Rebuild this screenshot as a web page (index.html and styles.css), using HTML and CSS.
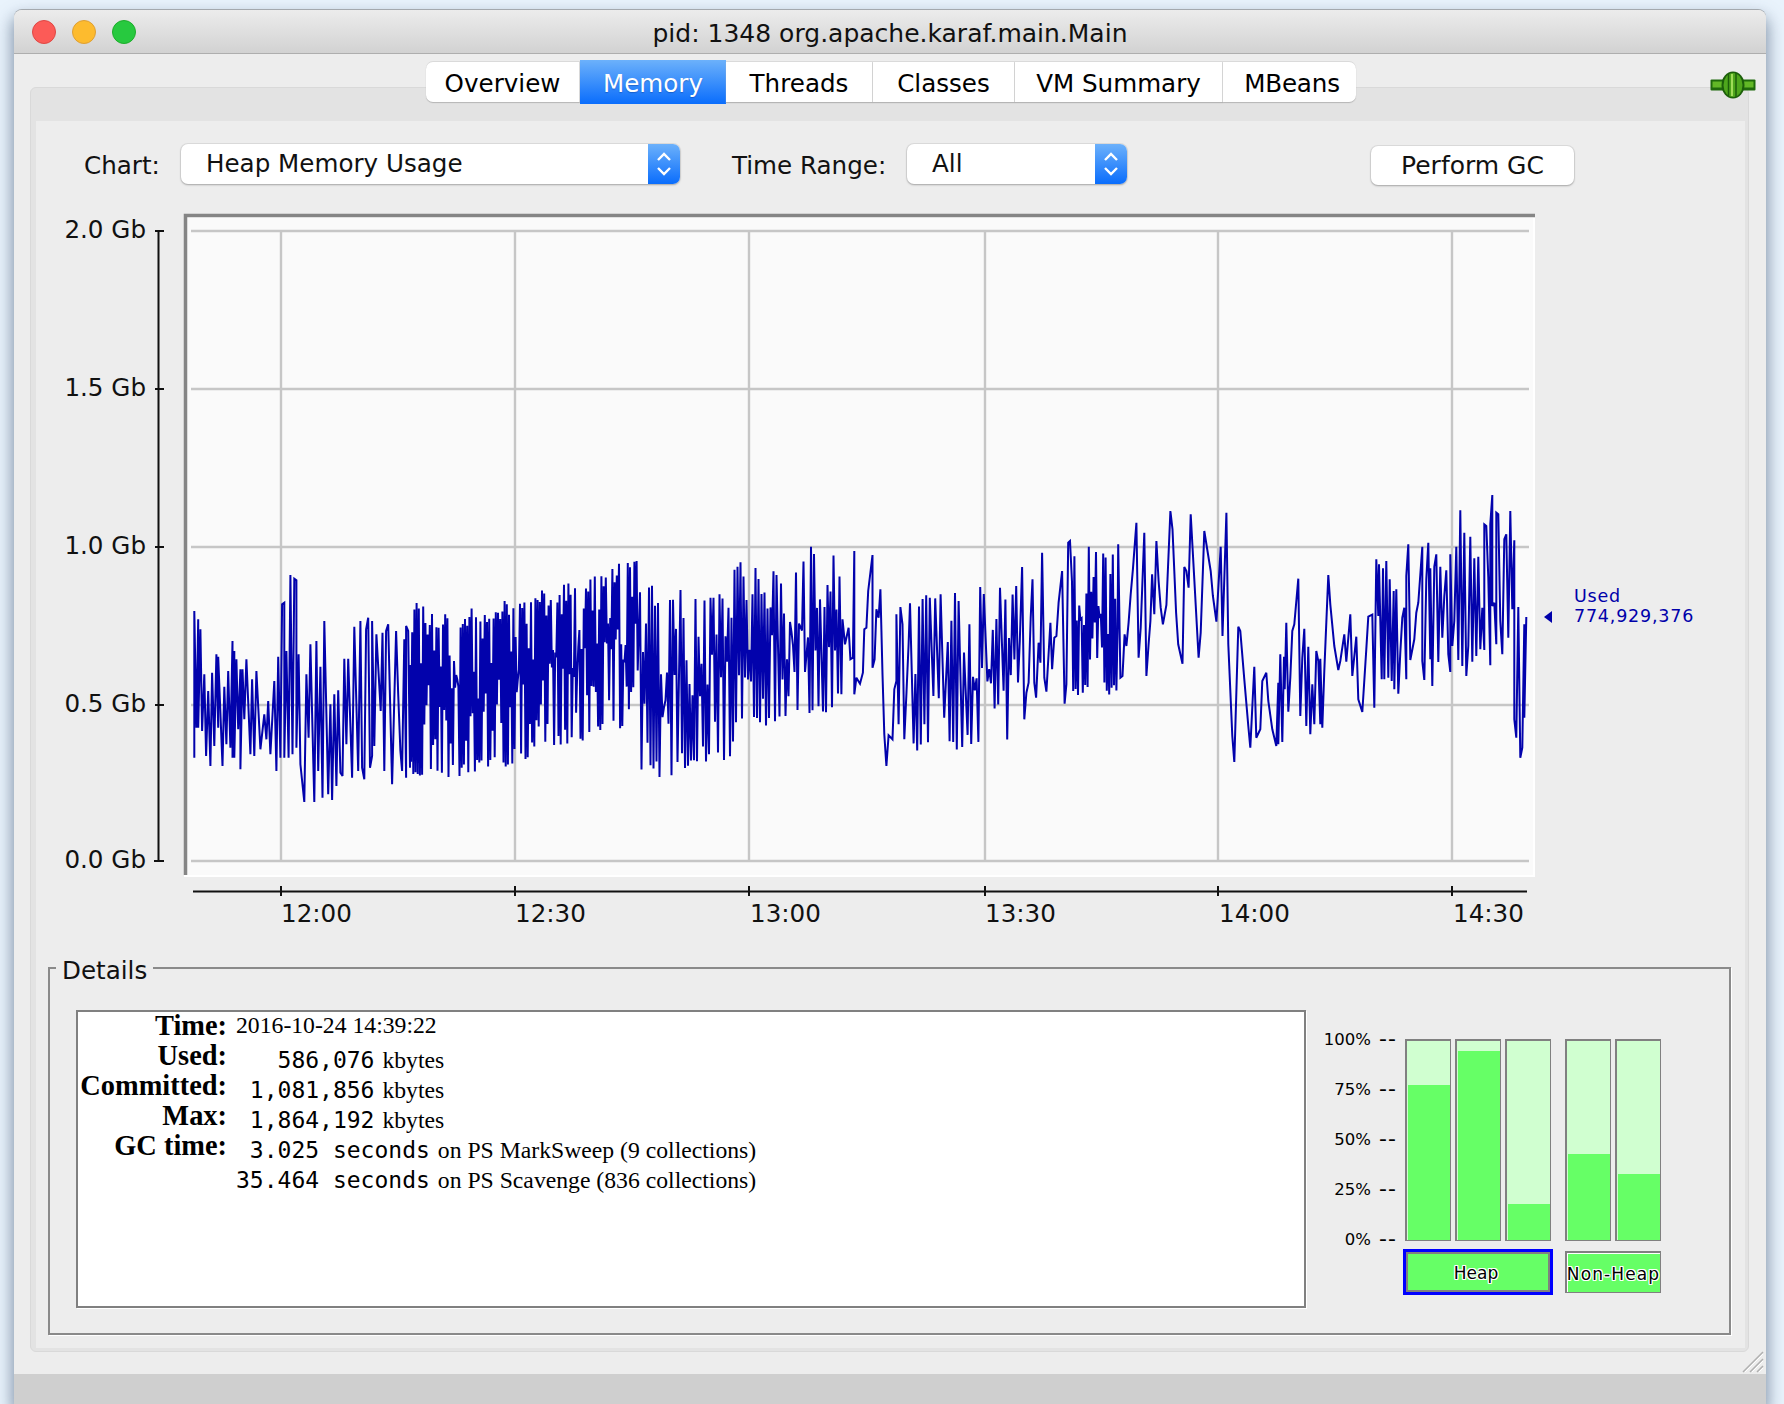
FILE: index.html
```html
<!DOCTYPE html>
<html lang="en">
<head>
<meta charset="utf-8">
<title>pid: 1348 org.apache.karaf.main.Main</title>
<link rel="stylesheet" href="styles.css">
</head>
<body>
<div class="window">
  <header class="titlebar">
    <div class="lights"><span class="light red"></span><span class="light amber"></span><span class="light green"></span></div>
    <div class="title">pid: 1348 org.apache.karaf.main.Main</div>
  </header>
  <div class="content">
    <nav class="tabs">
      <div class="tab tab-first t1">Overview</div>
      <div class="tab tab-active t2">Memory</div>
      <div class="tab t3">Threads</div>
      <div class="tab t4">Classes</div>
      <div class="tab t5">VM Summary</div>
      <div class="tab tab-last t6">MBeans</div>
    </nav>
    <div class="pane">
      <div class="panel">
        <div class="controls">
          <span class="ctl-label chart-label">Chart:</span>
          <div class="combo combo-chart"><span class="combo-text">Heap Memory Usage</span><span class="combo-arrows"><svg width="16" height="26" viewBox="0 0 16 26"><path class="chev" d="M2 9 L8 3 L14 9 M2 17 L8 23 L14 17"/></svg></span></div>
          <span class="ctl-label range-label">Time Range:</span>
          <div class="combo combo-range"><span class="combo-text">All</span><span class="combo-arrows"><svg width="16" height="26" viewBox="0 0 16 26"><path class="chev" d="M2 9 L8 3 L14 9 M2 17 L8 23 L14 17"/></svg></span></div>
          <button class="gc-button" type="button">Perform GC</button>
        </div>
        <svg class="chart" width="1709" height="740" viewBox="36 200 1709 740">
          <rect class="plot-edge" x="184" y="213" width="1351" height="663"/>
          <rect class="plot-bg" x="187" y="217" width="1346" height="657"/>
          <path class="plot-frame" d="M185.5 874 V214.5 H1535"/>
          <path class="grid" d="M191 230H1529M191 388H1529M191 546H1529M191 704H1529M191 860H1529M281 230V860M515 230V860M749 230V860M985 230V860M1218 230V860M1452 230V860"/>
          <path id="usedLine" class="series" d=""/>
          <path class="axis" d="M158.5 230V860M155 230H164M155 388H164M155 546H164M155 704H164M154 860H164"/>
          <path class="axis" d="M193 890.5H1527M281 885V895M515 885V895M749 885V895M985 885V895M1218 885V895M1452 885V895"/>
          <g class="axis-text">
            <text class="y-label" x="146" y="237">2.0 Gb</text>
            <text class="y-label" x="146" y="395">1.5 Gb</text>
            <text class="y-label" x="146" y="553">1.0 Gb</text>
            <text class="y-label" x="146" y="711">0.5 Gb</text>
            <text class="y-label" x="146" y="867">0.0 Gb</text>
            <text x="281" y="921">12:00</text>
            <text x="515" y="921">12:30</text>
            <text x="750" y="921">13:00</text>
            <text x="985" y="921">13:30</text>
            <text x="1219" y="921">14:00</text>
            <text x="1453" y="921">14:30</text>
          </g>
          <path class="legend-arrow" d="M1552 610 L1544 616 L1552 622 Z"/>
          <text class="legend-text" x="1574" y="601">Used</text>
          <text class="legend-text" x="1574" y="621">774,929,376</text>
        </svg>
        <section class="details">
          <span class="details-title">Details</span>
          <div class="info">
            <div class="info-row info-first"><b class="info-key">Time:</b><span class="info-val">2016-10-24 14:39:22</span></div>
            <div class="info-row"><b class="info-key">Used:</b><span class="info-val"><code>   586,076</code> kbytes</span></div>
            <div class="info-row"><b class="info-key">Committed:</b><span class="info-val"><code> 1,081,856</code> kbytes</span></div>
            <div class="info-row"><b class="info-key">Max:</b><span class="info-val"><code> 1,864,192</code> kbytes</span></div>
            <div class="info-row"><b class="info-key">GC time:</b><span class="info-val"><code> 3.025 seconds</code> on PS MarkSweep (9 collections)</span></div>
            <div class="info-row"><b class="info-key"></b><span class="info-val"><code>35.464 seconds</code> on PS Scavenge (836 collections)</span></div>
          </div>
          <div class="meters">
            <div class="scale">
              <div class="scale-row"><span>100%</span><i>--</i></div>
              <div class="scale-row"><span>75%</span><i>--</i></div>
              <div class="scale-row"><span>50%</span><i>--</i></div>
              <div class="scale-row"><span>25%</span><i>--</i></div>
              <div class="scale-row"><span>0%</span><i>--</i></div>
            </div>
            <div class="group group-heap">
              <div class="bars">
                <div class="bar"><div class="fill" style="height:78%"></div></div>
                <div class="bar"><div class="fill" style="height:95%"></div></div>
                <div class="bar"><div class="fill" style="height:18%"></div></div>
              </div>
              <div class="pool pool-selected"><span>Heap</span></div>
            </div>
            <div class="group group-nonheap">
              <div class="bars">
                <div class="bar"><div class="fill" style="height:43%"></div></div>
                <div class="bar"><div class="fill" style="height:33%"></div></div>
              </div>
              <div class="pool pool-wide"><span>Non-Heap</span></div>
            </div>
          </div>
        </section>
      </div>
    </div>
  </div>
  <footer class="statusbar"></footer>
  <svg class="plug" width="46" height="28" viewBox="0 0 46 28">
    <rect x="0.5" y="8.5" width="45" height="11" rx="1" fill="#1f6a0c"/>
    <rect x="2.5" y="10.5" width="41" height="6" fill="#62b826"/>
    <ellipse cx="23" cy="14" rx="11.5" ry="13.5" fill="#1c5f0a"/>
    <ellipse cx="23" cy="14" rx="9.5" ry="12" fill="#4ea61c"/>
    <path d="M18.5 3 V25 M26 2 V26" stroke="#1c5f0a" stroke-width="1.5" fill="none"/>
    <path d="M22 3 V25" stroke="#a0dc58" stroke-width="2" fill="none"/>
  </svg>
  <svg class="grip" width="22" height="22" viewBox="0 0 22 22">
    <path d="M1 21 L21 1 M8 21 L21 8 M15 21 L21 15" stroke="#b0b0b0" stroke-width="1.5" fill="none"/>
    <path d="M3 21 L21 3 M10 21 L21 10 M17 21 L21 17" stroke="#fff" stroke-width="1" fill="none"/>
  </svg>
</div>
<script src="chart.js"></script>
</body>
</html>
```

FILE: styles.css
```css
* { box-sizing: border-box; }
html, body { margin: 0; height: 100%; }
body {
  width: 1784px;
  height: 1404px;
  overflow: hidden;
  padding: 10px 18px 0 14px;
  background: #e9f3fc;
  font-family: "DejaVu Sans", sans-serif;
  color: #000;
}
.window {
  position: relative;
  height: 1394px;
  display: flex;
  flex-direction: column;
  background: #ededed;
  border-radius: 8px 8px 0 0;
  box-shadow: 0 -1px 0 #a4a9ae, 0 8px 16px 2px rgba(70, 90, 120, .62);
}
.titlebar {
  height: 44px;
  flex: none;
  display: grid;
  grid-template-columns: 1fr auto 1fr;
  align-items: center;
  background: linear-gradient(#ececec, #d2d2d2);
  border-bottom: 1px solid #aeaeae;
  border-radius: 8px 8px 0 0;
}
.lights { display: flex; gap: 16px; padding-left: 18px; }
.light { width: 24px; height: 24px; border-radius: 50%; }
.red { background: #fc5b57; border: 1px solid #df4744; }
.amber { background: #fdbb2e; border: 1px solid #de9f34; }
.green { background: #27c93f; border: 1px solid #1dad2b; }
.title { grid-column: 2; font-size: 25px; line-height: 30px; color: #111; margin-top: 5px; }
.content { flex: 1; display: flex; flex-direction: column; }
.tabs {
  position: relative;
  z-index: 1;
  height: 44px;
  margin-top: 6px;
  padding-left: 2px;
  display: flex;
  justify-content: center;
  align-items: center;
}
.tab {
  height: 40px;
  display: flex;
  align-items: center;
  justify-content: center;
  padding-top: 3px;
  background: #fff;
  font-size: 24.6px;
  border-right: 1px solid #d8d8d8;
  box-shadow: 0 1px 1px #b5b5b5, 0 -1px 0 #dadada;
}
.t1 { width: 154px; }
.t2 { width: 146px; }
.t3 { width: 147px; }
.t4 { width: 142px; }
.t5 { width: 208px; }
.t6 { width: 133px; padding-left: 5px; letter-spacing: -.2px; }
.tab-first { border-radius: 7px 0 0 7px; }
.tab-last { border-radius: 0 7px 7px 0; border-right: 0; }
.tab-active {
  height: 44px;
  color: #fff;
  background: linear-gradient(#6cb1fb, #0a6dfc);
  border: 0;
  box-shadow: none;
  text-shadow: 0 1px 1px rgba(0, 40, 120, .35);
}
.pane {
  flex: none;
  height: 1265px;
  margin: -17px 17px 0 16px;
  padding: 33px 3px 3px 5px;
  background: #e3e3e3;
  border: 1px solid #d9d9d9;
  border-radius: 6px;
}
.panel { height: 100%; background: #ededed; }
.controls { display: flex; align-items: flex-start; padding: 23px 0 0 48px; height: 80px; }
.ctl-label { font-size: 24.6px; line-height: 30px; margin-top: 7px; color: #111; }
.chart-label { width: 97px; }
.range-label { width: 175px; margin-left: 52px; }
.combo {
  height: 40px;
  display: flex;
  background: #fff;
  border-radius: 7px;
  box-shadow: 0 1px 2px #a8a8a8, 0 0 0 1px #dcdcdc;
}
.combo-chart { width: 499px; }
.combo-range { width: 220px; }
.combo-text { flex: 1; padding-left: 25px; font-size: 24.6px; line-height: 40px; color: #111; }
.combo-arrows {
  width: 32px;
  display: flex;
  align-items: center;
  justify-content: center;
  background: linear-gradient(#6cb1fb, #0a6dfc);
  border-radius: 0 7px 7px 0;
}
.chev { fill: none; stroke: #fff; stroke-width: 2.4; }
.gc-button {
  width: 203px;
  height: 39px;
  margin: 2px 0 0 244px;
  padding: 0;
  background: #fff;
  border: 0;
  border-radius: 7px;
  box-shadow: 0 1px 2px #a8a8a8, 0 0 0 1px #dcdcdc;
  font: 25px "DejaVu Sans", sans-serif;
  color: #111;
}
.chart { display: block; }
.plot-edge { fill: #fff; }
.plot-bg { fill: #fafafa; }
.plot-frame { fill: none; stroke: #858585; stroke-width: 3.5; }
.grid { fill: none; stroke: #c6c6c6; stroke-width: 2.4; }
.series { fill: none; stroke: #0202ac; stroke-width: 2; stroke-linejoin: miter; stroke-miterlimit: 3; }
.axis { fill: none; stroke: #111; stroke-width: 2; }
.axis-text text { font: 24.6px "DejaVu Sans", sans-serif; fill: #111; }
.axis-text .y-label { text-anchor: end; }
.legend-arrow { fill: #0000aa; }
.legend-text { font: 17.5px "DejaVu Sans", sans-serif; fill: #0000aa; letter-spacing: .8px; }
.details {
  position: relative;
  width: 1683px;
  height: 368px;
  margin: 26px 0 0 12px;
  padding: 41px 0 0 26px;
  display: flex;
  border: 2px solid #8a8a8a;
  box-shadow: 1px 1px 0 #fff;
}
.details-title {
  position: absolute;
  top: -13px;
  left: 6px;
  padding: 0 6px;
  background: #ededed;
  font-size: 24.6px;
  line-height: 30px;
  color: #111;
}
.info {
  width: 1230px;
  height: 298px;
  padding-top: 2px;
  background: #fff;
  border: 2px solid #808080;
  box-shadow: 1px 1px 0 #fff;
  font-family: "Liberation Serif", serif;
  font-size: 23.7px;
  color: #000;
}
.info-row { display: flex; height: 30px; align-items: flex-start; }
.info-key { width: 149px; margin-top: -3px; text-align: right; font-size: 28.4px; line-height: 30px; }
.info-val { margin: 1px 0 0 9px; line-height: 30px; white-space: pre; }
.info-first .info-val { margin-top: -4px; }
.info-val code { font-family: "DejaVu Sans Mono", monospace; font-size: 23px; margin-right: 2px; }
.meters { display: flex; align-items: flex-start; }
.scale { width: 91px; margin-top: 4px; }
.scale-row {
  height: 50px;
  display: flex;
  justify-content: flex-end;
  align-items: center;
  font-size: 16.5px;
  white-space: nowrap;
}
.scale-row i { width: 26px; text-align: right; font-style: normal; font-size: 22px; line-height: 20px; letter-spacing: 1px; }
.group { margin-top: 29px; }
.group-heap { width: 146px; margin-left: 8px; }
.group-nonheap { width: 96px; margin-left: 14px; }
.bars { display: flex; gap: 4px; height: 202px; }
.bar {
  width: 46px;
  display: flex;
  flex-direction: column;
  justify-content: flex-end;
  padding-left: 1px;
  background: #d0ffd0;
  border: 1px solid #808080;
  border-width: 2px 1px 1px 2px;
}
.fill { background: #66ff66; }
.pool {
  height: 42px;
  margin-top: 10px;
  display: flex;
  align-items: center;
  justify-content: center;
  padding-top: 2px;
  background: #66ff66;
  border: 1px solid #808080;
  border-width: 2px 1px 1px 2px;
  box-shadow: inset 1px 1px 0 #fff;
  font-size: 17px;
  text-shadow: 1px 0 0 #fff, -1px 0 0 #fff, 0 1px 0 #fff, 0 -1px 0 #fff, 1px 1px 0 #fff, -1px -1px 0 #fff, 1px -1px 0 #fff, -1px 1px 0 #fff;
  white-space: nowrap;
}
.pool-wide { letter-spacing: 1.1px; }
.pool-selected {
  width: 150px;
  height: 46px;
  margin: 8px 0 0 -2px;
  padding-right: 4px;
  border: 3px solid #0000ff;
  box-shadow: inset 0 0 0 2px #808080;
}
.statusbar { flex: none; height: 30px; background: #cfcfcf; }
.plug { position: absolute; left: 1696px; top: 61px; }
.grip { position: absolute; left: 1728px; top: 1341px; }
```

FILE: chart.js
```js
// Samples of the "Used" heap series; dense stretches are seeded, sparse ones are read off the trace.
(function () {
  var seed = 1348;
  function rnd() {
    seed |= 0; seed = seed + 0x6D2B79F5 | 0;
    var t = Math.imul(seed ^ seed >>> 15, 1 | seed);
    t = t + Math.imul(t ^ t >>> 7, 61 | t) ^ t;
    return ((t ^ t >>> 14) >>> 0) / 4294967296;
  }
  var pts = [];
  function env(table, x) {
    for (var i = 1; i < table.length; i++) {
      if (x <= table[i][0]) {
        var a = table[i - 1], b = table[i], k = (x - a[0]) / (b[0] - a[0]);
        return [a[1] + (b[1] - a[1]) * k, a[2] + (b[2] - a[2]) * k];
      }
    }
    return table[table.length - 1].slice(1);
  }
  function gen(table, step, skip) {
    var x = table[0][0], end = table[table.length - 1][0], up = true;
    while (x < end) {
      var e = env(table, x), r = rnd(), span = e[1] - e[0];
      var off = (r < .5 ? r * .35 : r * r) * span * .62;
      pts.push([x, up ? e[0] + off : e[1] - off]);
      up = !up;
      x += step * (rnd() < skip ? 2 : 1);
    }
  }
  function trace(list, ox, sx, oy) {
    for (var i = 0; i < list.length; i += 2) {
      pts.push([ox + list[i] / sx, oy + list[i + 1] / 3]);
    }
  }
  var Z5 = [170, 2.8, 480], Z6 = [720, 2.8, 480], Z7 = [1200, 3, 470];

  trace([68,830,68,390,74,740,79,415,79,740,85,445,90,750,96,580,101,825,107,630,113,855,118,575,124,795,130,520,135,740,135,527,147,855,152,617,158,790,163,570,169,800,175,480,175,830,180,510,180,830,186,535,191,745,197,565,197,865,203,565,208,715,214,535,225,820,230,595,236,825,242,570,253,805,264,700,270,775,275,660,281,820,292,600,298,870,303,527,309,830,314,370,320,365,320,830,326,510,332,830,337,282,343,820,348,293,354,298,354,800,360,520,365,850,376,963,382,580,388,770,393,490,399,745,404,963,410,480,415,870,421,557,427,950,432,420,443,940,449,670,454,957,460,640,466,915,471,628,477,875,483,885,488,533,494,790,499,533,510,890,516,437,527,870,533,420,538,860,544,895,549,445,555,410,560,860,566,825,566,420,572,795,578,460,590,690,595,455,600,870,605,450,611,430,622,910,633,450,639,640,645,810,650,870,656,475,661,890,661,435,667,450,672,860], Z5[0], Z5[1], Z5[2]);
  gen([[410,600,780],[450,612,780],[500,600,768],[560,585,748],[620,562,730],[638,548,712]], 1.1, 0);
  gen([[640,572,775],[660,592,780],[700,585,762],[730,592,760],[736,558,730],[790,568,728],[815,532,715],[840,538,708]], 1.5, .1);
  trace([340,640,343,415,350,490,360,440,365,535,372,530,376,210,376,640,382,590,392,608,400,575,404,445,410,440,415,330,427,222,427,560,433,535,438,385,444,410,449,325,455,580,460,760,466,855,472,763,483,775,488,625,494,600,494,400,500,730,505,378,511,430,516,775,522,640,528,490], Z6[0], Z6[1], Z6[2]);
  gen([[910,596,752],[945,590,750],[975,582,748],[1000,586,742],[1022,576,738]], 1.8, .15);
  trace([846,258,852,715,858,635,864,605,870,410,875,295,880,605,885,650,892,485,897,545,902,215,908,590,914,632,925,425,930,565,936,470,942,465,948,365,958,270,965,668,970,610,975,185,980,180], Z6[0], Z6[1], Z6[2]);
  gen([[1072,540,700],[1118,540,692]], 1.2, 0);
  trace([1115,190,1121,590,1127,585,1133,460,1138,495,1144,425,1150,340,1156,265,1166,125,1172,530,1178,440,1188,155,1194,585,1200,490,1205,420,1210,280,1216,400,1222,180,1228,300,1234,380,1240,430,1250,372,1261,90,1267,145,1277,395,1283,490,1295,548,1300,258,1306,270,1312,320,1318,100,1328,295,1340,530,1346,455,1356,150,1374,270,1380,345,1390,422,1402,197,1407,465,1418,95], Z6[0], Z6[1], Z6[2]);
  trace([85,520,97,795,103,873,115,467,121,480,133,625,145,765,151,830,163,587,169,800,181,775,187,630,199,605,205,690,217,775,229,825,235,635,235,820,241,550,247,813,252,557,254,655,259,455,265,722,271,620,277,480,283,460,295,323,301,735,307,560,313,473,319,765,325,527,331,790,337,640,343,760,349,540,355,570,361,760,361,563,367,770,373,600,385,312,391,400,403,525,415,597,421,570,433,490,439,572,451,430,457,615,469,497,475,685,487,723,499,535,505,437,517,431,523,710], Z7[0], Z7[1], Z7[2]);
  trace([529,265,535,435,537,280,545,625,549,292,553,625,559,270,565,620,569,325,575,630,581,360,583,655,589,355], Z7[0], Z7[1], Z7[2]);
  trace([595,668,601,545,607,440,613,410,619,625,619,315,625,220,631,567,643,505,649,425,655,395,667,227,667,570,673,627,679,325,685,215,691,565,691,292,697,645,703,287,709,250,715,573,721,287,727,500,733,375,739,298,745,550,751,603,751,250,757,525,763,450,769,227,775,567,781,118,787,585,793,185,799,615,805,525,811,197,817,572,823,262,829,555,835,257,841,535,847,410,853,537,853,160,859,165,865,320,871,583,871,160,877,72,877,405,883,395,889,520,889,125,895,130,901,450,907,550,913,205,919,190,925,500,931,120,937,415,943,208,943,745,949,800,955,408,961,860,967,830,973,460,973,740,979,438], Z7[0], Z7[1], Z7[2]);

  var d = pts.map(function (p, i) {
    return (i ? 'L' : 'M') + p[0].toFixed(1) + ' ' + p[1].toFixed(1);
  }).join('');
  document.getElementById('usedLine').setAttribute('d', d);
})();
```
